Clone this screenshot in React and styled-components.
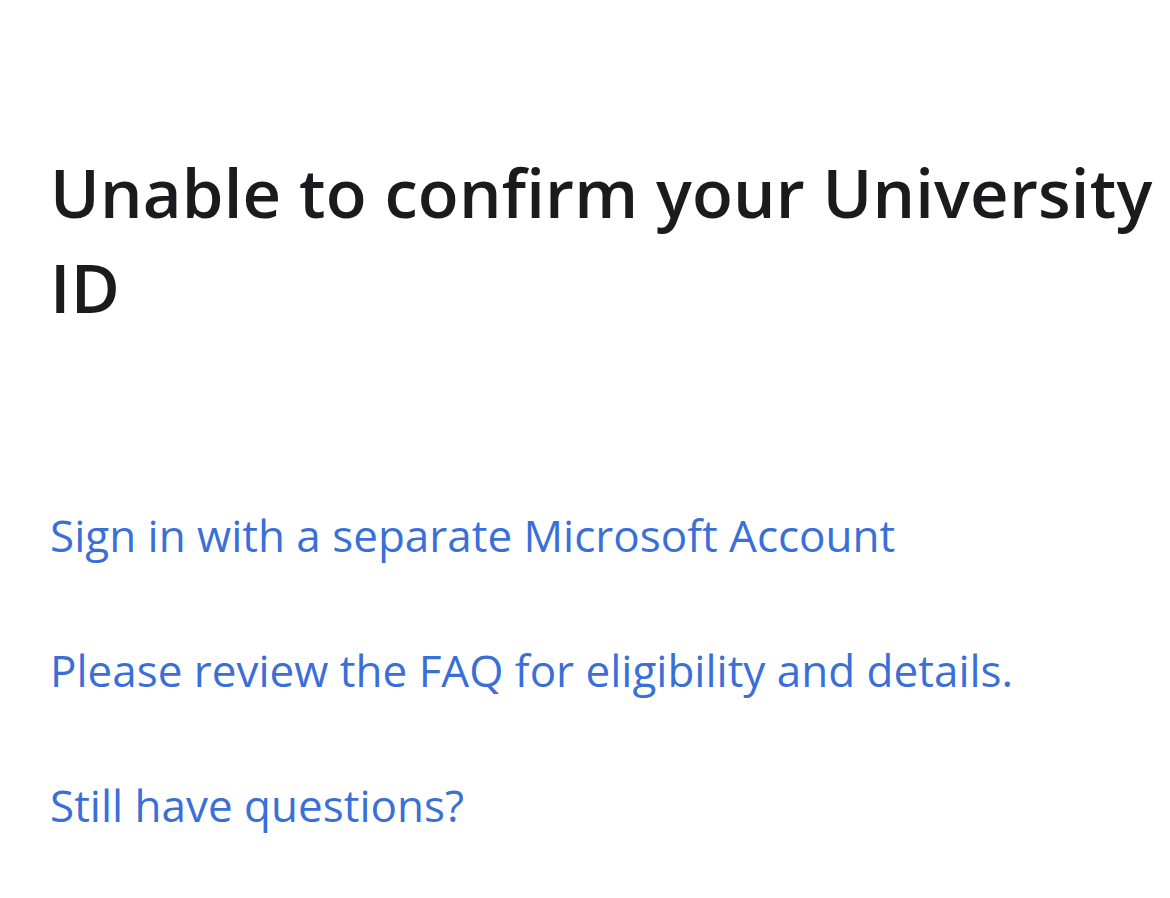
import React from 'react';
import styled, { createGlobalStyle } from 'styled-components';

const GlobalStyle = createGlobalStyle`
  html, body {
    margin: 0;
    padding: 0;
    background: #ffffff;
  }
  body {
    font-family: "Open Sans", "Noto Sans", "Liberation Sans", sans-serif;
  }
`;

const Page = styled.main`
  display: flex;
  flex-direction: column;
  padding: 145px 0 0 50px;
  min-height: 100vh;
  box-sizing: border-box;
`;

const Title = styled.h1`
  margin: 0;
  font-size: 67px;
  font-weight: 600;
  line-height: 95px;
  color: #1b1b1f;
  letter-spacing: 0.2px;
`;

const Links = styled.div`
  display: flex;
  flex-direction: column;
  gap: 75px;
  margin-top: 170px;
`;

const Link = styled.a`
  font-size: 44px;
  font-weight: 400;
  line-height: 60px;
  color: #3a6fd8;
  text-decoration: none;
  width: fit-content;
`;

const links = [
  'Sign in with a separate Microsoft Account',
  'Please review the FAQ for eligibility and details.',
  'Still have questions?',
];

const App = () => {
  return (
    <>
      <GlobalStyle />
      <Page>
        <Title>Unable to confirm your University ID</Title>
        <Links>
          {links.map((text, index) => (
            <Link key={index} href="#">
              {text}
            </Link>
          ))}
        </Links>
      </Page>
    </>
  );
};

export default App;
